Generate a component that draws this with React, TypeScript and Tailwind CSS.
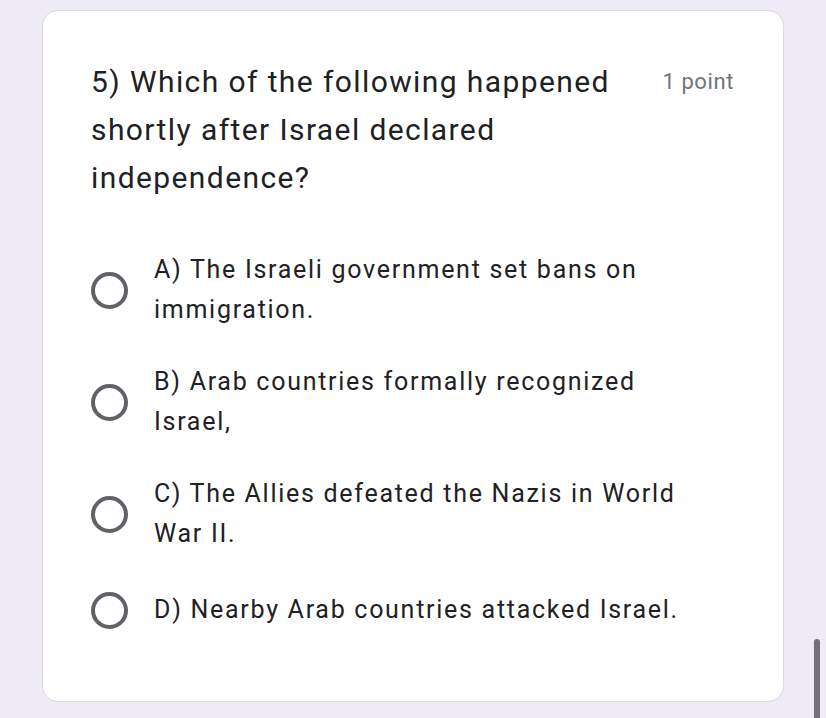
const options = [
  "A) The Israeli government set bans on immigration.",
  "B) Arab countries formally recognized Israel,",
  "C) The Allies defeated the Nazis in World War II.",
  "D) Nearby Arab countries attacked Israel.",
];

export default function App() {
  return (
    <div className="relative min-h-[718px] bg-[#eeebf6] pt-[10px] pl-[42px] pr-[42px] pb-[18px] font-['Roboto',sans-serif]">
      <div className="w-[742px] rounded-[16px] border border-[#dcdae0] bg-white pl-[48px] pr-[49px] pt-[47px] pb-[67px]">
        <div className="flex items-start justify-between">
          <h2 className="w-[560px] text-[30px] leading-[48px] tracking-[1.4px] text-[#202124]">
            5) Which of the following happened shortly after Israel declared independence?
          </h2>
          <span className="mt-[10px] text-[22px] leading-[28px] tracking-[0.6px] text-[#70757a]">1 point</span>
        </div>

        <div className="mt-[48px] flex flex-col gap-[32px]">
          {options.map((opt) => (
            <label key={opt} className="flex min-h-[48px] items-center">
              <span className="h-[37px] w-[37px] shrink-0 rounded-full border-[4px] border-[#5f6368]" />
              <span className="ml-[26px] w-[540px] text-[25px] leading-[40px] tracking-[1.72px] text-[#202124]">{opt}</span>
            </label>
          ))}
        </div>
      </div>

      {/* scrollbar */}
      <div className="absolute right-[6px] top-[639px] h-[79px] w-[6px] rounded-t-full bg-[#747079]" />
    </div>
  );
}
